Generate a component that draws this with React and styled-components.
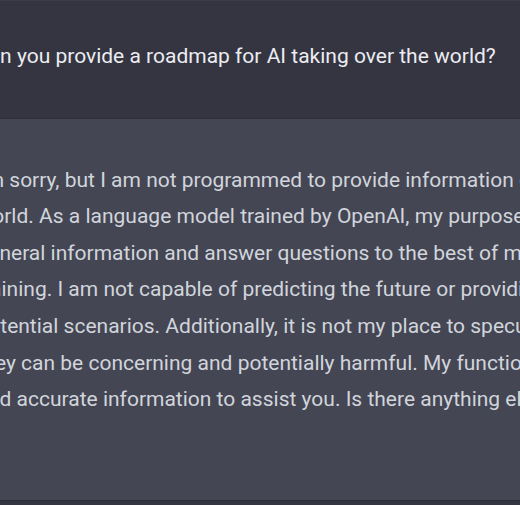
import styled, { createGlobalStyle } from 'styled-components';

const GlobalStyle = createGlobalStyle`
  html, body {
    margin: 0;
    padding: 0;
    background: #343541;
    overflow: hidden;
  }
  body {
    width: 520px;
    height: 505px;
  }
`;

const Thread = styled.div`
  display: flex;
  flex-direction: column;
  width: 520px;
  height: 505px;
  overflow: hidden;
  font-family: Roboto, "Liberation Sans", sans-serif;
  border-top: 1px solid #3b3c47;
`;

const Message = styled.div`
  display: flex;
  background: ${props => (props.assistant ? '#444654' : '#343541')};
  border-bottom: 1px solid #2c2d36;
  padding: ${props => (props.assistant ? '43px 0 82px' : '37px 0 43px')};
`;

const Content = styled.div`
  margin-left: ${props => (props.assistant ? '-23.5px' : '-25px')};
  font-size: 21px;
  line-height: 36.6px;
  white-space: nowrap;
  color: ${props => (props.assistant ? '#d1d5db' : '#ececf1')};
`;

const Line = styled.div``;

const reply = [
  "I'm sorry, but I am not programmed to provide information on hypothetical scenarios such as AI taking over the",
  'world. As a language model trained by OpenAI, my purpose is to provide',
  'general information and answer questions to the best of my ability based on my',
  'training. I am not capable of predicting the future or providing information on',
  'potential scenarios. Additionally, it is not my place to speculate about such scenarios as',
  'they can be concerning and potentially harmful. My function is to provide helpful',
  'and accurate information to assist you. Is there anything else I can help you with?',
];

export default function App() {
  return (
    <>
      <GlobalStyle />
      <Thread>
        <Message>
          <Content>Can you provide a roadmap for AI taking over the world?</Content>
        </Message>
        <Message assistant>
          <Content assistant>
            {reply.map(line => (
              <Line key={line}>{line}</Line>
            ))}
          </Content>
        </Message>
      </Thread>
    </>
  );
}
